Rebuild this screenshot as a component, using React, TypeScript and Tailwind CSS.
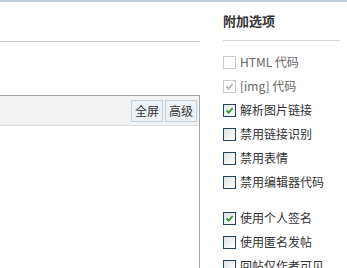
const FONT = { fontFamily: '"Noto Sans CJK SC", "Liberation Sans", sans-serif' };

type Opt = { label: string; checked?: boolean; disabled?: boolean; gap?: boolean };

const OPTIONS: Opt[] = [
  { label: 'HTML 代码', disabled: true },
  { label: '[img] 代码', checked: true, disabled: true },
  { label: '解析图片链接', checked: true },
  { label: '禁用链接识别' },
  { label: '禁用表情' },
  { label: '禁用编辑器代码' },
  { label: '使用个人签名', checked: true, gap: true },
  { label: '使用匿名发帖' },
  { label: '回帖仅作者可见' },
];

function Box({ checked, disabled }: { checked?: boolean; disabled?: boolean }) {
  return (
    <span
      className={
        disabled
          ? 'flex h-[13px] w-[13px] items-center justify-center border border-[#c9c9c9] bg-white'
          : 'flex h-[13px] w-[13px] items-center justify-center border border-[#23435f] bg-gradient-to-br from-[#dfe3e8] to-white'
      }
    >
      {checked ? (
        <svg width="9" height="9" viewBox="0 0 9 9">
          <path
            d="M1.5 4.5 L3.6 6.6 L7.6 2"
            fill="none"
            stroke={disabled ? '#b5b5b5' : '#2f9a2c'}
            strokeWidth="1.8"
          />
        </svg>
      ) : null}
    </span>
  );
}

export default function App() {
  return (
    <div className="flex h-[268px] w-[347px] overflow-hidden border-t-2 border-[#c3cdd9] bg-white text-[12px] text-[#333]" style={FONT}>
      <div className="flex w-[200px] flex-col">
        <div className="h-[40px] border-b border-[#cacaca]" />
        <div className="h-[53px]" />
        <div className="flex flex-1 flex-col border-t border-r border-[#a3a3a3]">
          <div className="flex h-[30px] items-center justify-end gap-[2px] border-b border-[#e2e2e2] bg-[#f2f2f2] pr-[2px]">
            <span className="border border-[#c6d1dc] bg-[#edf2f6] px-[3px] leading-[20px]">全屏</span>
            <span className="border border-[#c6d1dc] bg-[#edf2f6] px-[3px] leading-[20px]">高级</span>
          </div>
          <div className="flex-1 bg-white" />
        </div>
      </div>
      <div className="flex-1 pl-[23px] pr-[7px]">
        <div className="pt-[11px] text-[13px] font-bold leading-[16px] text-[#333]">附加选项</div>
        <div className="mt-[11px] h-px bg-[#d4d4d4]" />
        <div className="pt-[9px]">
          {OPTIONS.map((o, i) => (
            <div key={i} className={'flex h-6 items-center gap-[4px] ' + (o.gap ? 'mt-[12px]' : '')}>
              <Box checked={o.checked} disabled={o.disabled} />
              <span className={o.disabled ? 'text-[#666]' : 'text-[#333]'}>{o.label}</span>
            </div>
          ))}
        </div>
      </div>
    </div>
  );
}
